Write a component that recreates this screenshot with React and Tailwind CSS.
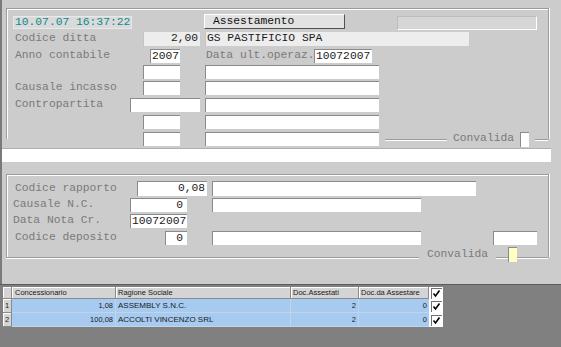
import React from 'react';

const Field = ({ className = '', children }) => (
    <div className={`h-[14px] shrink-0 bg-white border-t border-l border-[#8a8a8a] flex items-center leading-none whitespace-pre text-[#1a1a1a] overflow-hidden ${className}`}>
        {children}
    </div>
);

const Label = ({ className = '', children }) => (
    <span className={`shrink-0 whitespace-pre leading-none text-[#7a7a7a] ${className}`}>{children}</span>
);

const Check = () => (
    <svg width="9" height="9" viewBox="0 0 9 9">
        <path d="M1.5 4.5 L3.5 7 L7.5 1.5" stroke="#000" strokeWidth="1.6" fill="none" />
    </svg>
);

const CheckCell = () => (
    <div className="w-[14px] shrink-0 bg-white flex items-center justify-center">
        <div className="w-[11px] h-[11px] border-t border-l border-[#707070] bg-white flex items-center justify-center">
            <Check />
        </div>
    </div>
);

const rows = [
    { n: '1', conc: '1,08', rag: 'ASSEMBLY S.N.C.', ass: '2', da: '0' },
    { n: '2', conc: '100,08', rag: 'ACCOLTI VINCENZO SRL', ass: '2', da: '0' },
];

const App = () => {
    return (
        <div className="w-[561px] h-[347px] bg-[#cccccc] flex flex-col overflow-hidden font-['Liberation_Mono',monospace] text-[11.3px]">
            {/* form area */}
            <div className="h-[284px] shrink-0 border-l-2 border-[#7a7a7a] flex flex-col">
                {/* first group */}
                <div className="mt-[8px] ml-[4px] w-[543px] h-[131px] shrink-0 border-t border-l border-r border-[#9c9c9c] shadow-[inset_1px_1px_0_#ffffff,1px_0_0_#ffffff] flex flex-col">
                    {/* row 1 */}
                    <div className="mt-[5px] h-[16px] flex items-start">
                        <div className="ml-[6px] mt-[2px] w-[119px] h-[13px] shrink-0 bg-[#dadada] border border-[#e8e8e8] flex items-center pl-[1px] whitespace-pre text-[#0a8a8a] leading-none">
                            10.07.07 16:37:22
                        </div>
                        <div className="ml-[72px] w-[141px] h-[15px] shrink-0 bg-[#e2e2e2] border-t border-l border-white border-r border-b border-r-[#505050] border-b-[#505050] flex items-center pl-[8px] text-[#111] leading-none">
                            Assestamento
                        </div>
                        <div className="ml-[52px] mt-[2px] w-[140px] h-[14px] shrink-0 bg-[#d6d6d6] border border-[#bcbcbc] border-r-white border-b-white" />
                    </div>
                    {/* row 2 */}
                    <div className="mt-[2px] h-[14px] flex items-center">
                        <Label className="ml-[8px] w-[128px]">Codice ditta</Label>
                        <div className="w-[57px] h-[14px] shrink-0 bg-[#ededed] border-l border-[#c4c4c4] flex items-center justify-end pr-[2px] text-[#1a1a1a] leading-none">2,00</div>
                        <div className="ml-[5px] w-[264px] h-[14px] shrink-0 bg-[#ededed] border-l border-[#c4c4c4] flex items-center pl-[1px] whitespace-pre text-[#1a1a1a] leading-none">GS PASTIFICIO SPA</div>
                    </div>
                    {/* row 3 */}
                    <div className="mt-[3px] h-[14px] flex items-center">
                        <Label className="ml-[8px] w-[135px]">Anno contabile</Label>
                        <Field className="w-[30px] pl-[1px]">2007</Field>
                        <Label className="ml-[26px] w-[108px]">Data ult.operaz.</Label>
                        <Field className="w-[58px] pl-[1px]">10072007</Field>
                    </div>
                    {/* row 4 */}
                    <div className="mt-[2px] h-[14px] flex items-center">
                        <Field className="ml-[136px] w-[37px]" />
                        <Field className="ml-[25px] w-[174px]" />
                    </div>
                    {/* row 5 */}
                    <div className="mt-[2px] h-[14px] flex items-center">
                        <Label className="ml-[8px] w-[128px]">Causale incasso</Label>
                        <Field className="w-[37px]" />
                        <Field className="ml-[25px] w-[174px]" />
                    </div>
                    {/* row 6 */}
                    <div className="mt-[3px] h-[14px] flex items-center">
                        <Label className="ml-[8px] w-[115px]">Contropartita</Label>
                        <Field className="w-[70px]" />
                        <Field className="ml-[5px] w-[174px]" />
                    </div>
                    {/* row 7 */}
                    <div className="mt-[3px] h-[14px] flex items-center">
                        <Field className="ml-[136px] w-[37px]" />
                        <Field className="ml-[25px] w-[174px]" />
                    </div>
                    {/* row 8 + convalida */}
                    <div className="mt-[3px] h-[14px] flex items-center">
                        <Field className="ml-[136px] w-[37px]" />
                        <Field className="ml-[25px] w-[174px]" />
                        <div className="ml-[6px] w-[62px] h-px bg-[#9c9c9c] shadow-[0_1px_0_#ffffff]" />
                        <Label className="ml-[6px]">Convalida</Label>
                        <div className="ml-[6px] w-[9px] h-[15px] shrink-0 bg-white border-t border-l border-[#8a8a8a]" />
                        <div className="ml-[6px] flex-1 h-px bg-[#9c9c9c] shadow-[0_1px_0_#ffffff]" />
                    </div>
                </div>

                {/* white message bar */}
                <div className="mt-[9px] w-[549px] h-[14px] shrink-0 bg-white border-t border-[#b0b0b0]" />

                {/* second group */}
                <div className="mt-[12px] ml-[4px] w-[543px] h-[83px] shrink-0 border-t border-l border-r border-[#9c9c9c] shadow-[inset_1px_1px_0_#ffffff,1px_0_0_#ffffff] flex flex-col">
                    <div className="mt-[6px] h-[15px] flex items-center">
                        <Label className="ml-[8px] w-[122px]">Codice rapporto</Label>
                        <Field className="w-[70px] h-[15px] justify-end pr-[2px]">0,08</Field>
                        <Field className="ml-[5px] w-[264px] h-[15px]" />
                    </div>
                    <div className="mt-[2px] h-[14px] flex items-center">
                        <Label className="ml-[6px] w-[117px]">Causale N.C.</Label>
                        <Field className="w-[57px] justify-end pr-[4px]">0</Field>
                        <Field className="ml-[25px] w-[209px]" />
                    </div>
                    <div className="mt-[2px] h-[14px] flex items-center">
                        <Label className="ml-[6px] w-[117px]">Data Nota Cr.</Label>
                        <Field className="w-[57px] pl-[1px]">10072007</Field>
                    </div>
                    <div className="mt-[3px] h-[14px] flex items-center">
                        <Label className="ml-[8px] w-[150px]">Codice deposito</Label>
                        <Field className="w-[22px] justify-end pr-[4px]">0</Field>
                        <Field className="ml-[25px] w-[209px]" />
                        <Field className="ml-[72px] w-[44px]" />
                    </div>
                    <div className="mt-[2px] h-[15px] flex items-start">
                        <div className="-ml-[1px] mt-[10px] w-[413px] h-px bg-[#9c9c9c] shadow-[0_1px_0_#ffffff]" />
                        <Label className="ml-[8px] mt-[2px]">Convalida</Label>
                        <div className="ml-[8px] mt-[10px] w-[12px] h-px bg-[#9c9c9c] shadow-[0_1px_0_#ffffff]" />
                        <div className="w-[9px] h-[15px] shrink-0 bg-[#ffffc4] border-t border-l border-[#8a8a8a]" />
                        <div className="mt-[10px] flex-1 h-px bg-[#9c9c9c] shadow-[0_1px_0_#ffffff]" />
                    </div>
                </div>
            </div>

            {/* grid area */}
            <div className="flex-1 bg-[#808080] border-t border-[#5c5c5c] font-['Liberation_Sans',Arial,sans-serif] text-[7.5px] text-[#1a1a1a]">
                <div className="mt-[2px] ml-[3px] flex flex-col w-[440px]">
                    <div className="h-[12px] flex">
                        <div className="w-[9px] shrink-0 bg-[#d4d4d4] border-r border-b border-[#8a8a8a] shadow-[inset_1px_1px_0_#ffffff]" />
                        <div className="w-[104px] shrink-0 bg-[#d4d4d4] border-r border-b border-[#8a8a8a] shadow-[inset_1px_1px_0_#ffffff] flex items-center pl-[3px] leading-none">Concessionario</div>
                        <div className="w-[175px] shrink-0 bg-[#d4d4d4] border-r border-b border-[#8a8a8a] shadow-[inset_1px_1px_0_#ffffff] flex items-center pl-[2px] leading-none">Ragione Sociale</div>
                        <div className="w-[68px] shrink-0 bg-[#d4d4d4] border-r border-b border-[#8a8a8a] shadow-[inset_1px_1px_0_#ffffff] flex items-center pl-[2px] leading-none">Doc.Assestati</div>
                        <div className="w-[70px] shrink-0 bg-[#d4d4d4] border-r border-b border-[#8a8a8a] shadow-[inset_1px_1px_0_#ffffff] flex items-center pl-[2px] leading-none">Doc.da Assestare</div>
                        <CheckCell />
                    </div>
                    {rows.map((r) => (
                        <div key={r.n} className="h-[14px] flex">
                            <div className="w-[9px] shrink-0 bg-[#d4d4d4] border-r border-b border-[#8a8a8a] shadow-[inset_1px_1px_0_#ffffff] flex items-center justify-center leading-none">{r.n}</div>
                            <div className="w-[104px] shrink-0 bg-[#a6caf0] border-r border-b border-[#c4d4e4] flex items-center justify-end pr-[2px] leading-none">{r.conc}</div>
                            <div className="w-[175px] shrink-0 bg-[#a6caf0] border-r border-b border-[#c4d4e4] flex items-center pl-[2px] leading-none text-[8px]">{r.rag}</div>
                            <div className="w-[68px] shrink-0 bg-[#a6caf0] border-r border-b border-[#c4d4e4] flex items-center justify-end pr-[2px] leading-none">{r.ass}</div>
                            <div className="w-[70px] shrink-0 bg-[#a6caf0] border-b border-[#c4d4e4] flex items-center justify-end pr-[2px] leading-none">{r.da}</div>
                            <CheckCell />
                        </div>
                    ))}
                </div>
            </div>
        </div>
    );
};

export default App;
